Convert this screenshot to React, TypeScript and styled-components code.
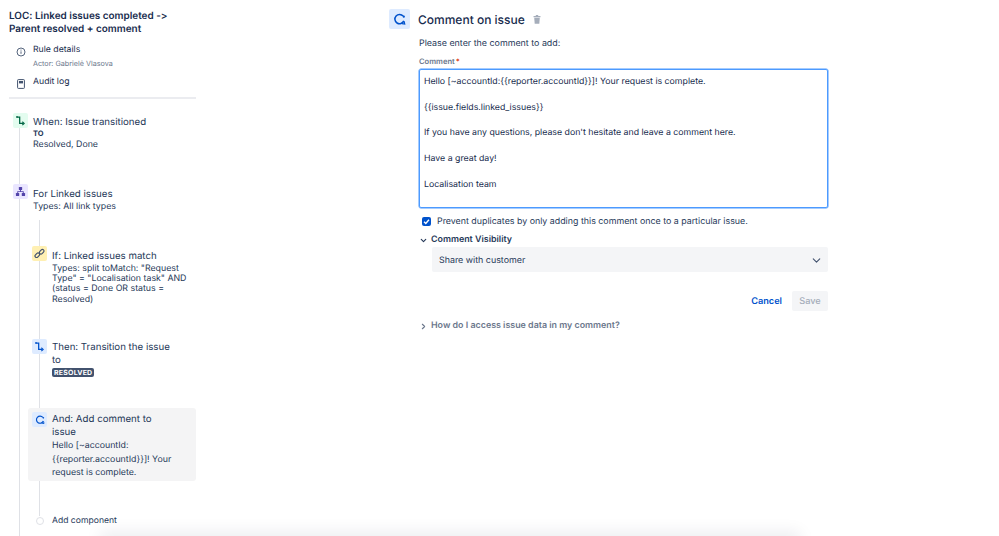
import React from 'react'
import styled, { createGlobalStyle } from 'styled-components'
import { ChevronDown, ChevronRight } from 'lucide-react'

const GlobalStyle = createGlobalStyle`
  html, body {
    margin: 0;
    padding: 0;
    background: #fff;
    font-family: Inter, "Liberation Sans", sans-serif;
    color: #172b4d;
    text-rendering: geometricPrecision;
    font-feature-settings: "calt" 0, "liga" 0;
  }
`

const Page = styled.div`
  position: relative;
  display: flex;
  width: 999px;
  height: 536px;
  overflow: hidden;
  background: #fff;
`

const Sidebar = styled.aside`
  width: 187px;
  margin-left: 9px;
  padding-top: 10px;
  flex-shrink: 0;
`

const RuleTitle = styled.h1`
  margin: 0;
  font-size: 9.95px;
  line-height: 13px;
  font-weight: 600;
`

const NavItem = styled.div<{ $top: number; $height: number }>`
  display: flex;
  gap: 7px;
  margin-top: ${props => props.$top}px;
  height: ${props => props.$height}px;
  padding-left: 6px;
`

const NavIcon = styled.div`
  width: 11px;
  padding-top: 3px;
  display: flex;
  justify-content: center;
  color: #42526e;
`

const NavLabel = styled.div`
  font-size: 8.7px;
  line-height: 12px;
`

const NavActor = styled.div`
  font-size: 7.2px;
  line-height: 11px;
  margin-top: 2px;
  color: #6b778c;
`

const Divider = styled.hr`
  border: 0;
  height: 2px;
  background: #ebecf0;
  margin: 7px 0 0;
`

const Timeline = styled.div`
  position: relative;
  margin-top: 14px;
  &::before {
    content: '';
    position: absolute;
    left: 10px;
    top: 14px;
    height: 430px;
    width: 1px;
    background: #dfe1e6;
  }
`

const Branch = styled.div`
  position: relative;
  &::before {
    content: '';
    position: absolute;
    left: 30px;
    top: -26px;
    height: 296px;
    width: 1px;
    background: #dfe1e6;
  }
`

const Step = styled.div<{ $indent?: boolean; $height: number; $active?: boolean }>`
  position: relative;
  display: flex;
  gap: 5px;
  height: ${props => props.$height}px;
  margin-left: ${props => (props.$indent ? 19 : 0)}px;
  padding-left: 4px;
  padding-top: ${props => (props.$active ? 4 : 0)}px;
  box-sizing: border-box;
  border-radius: 3px;
  background: ${props => (props.$active ? '#f4f4f5' : 'transparent')};
`

const StepIcon = styled.div<{ $bg: string; $color: string }>`
  width: 15px;
  height: 15px;
  flex-shrink: 0;
  display: flex;
  align-items: center;
  justify-content: center;
  border-radius: 2px;
  background: ${props => props.$bg};
  color: ${props => props.$color};
  position: relative;
  z-index: 1;
`

const StepBody = styled.div`
  min-width: 0;
  flex: 1;
`

const StepTitle = styled.div<{ $narrow?: boolean; $top: number }>`
  font-size: 9.7px;
  line-height: 13px;
  margin-top: ${props => props.$top}px;
  color: #253858;
  max-width: ${props => (props.$narrow ? '122px' : 'none')};
`

const StepText = styled.div`
  font-size: 8.8px;
  line-height: 10.4px;
  color: #253858;
  margin-top: 1px;
  padding-right: 6px;
`

const CommentPreview = styled(StepText)`
  line-height: 13.5px;
  margin-top: 0;
`

const ToLabel = styled.div`
  font-size: 7.5px;
  line-height: 10px;
  margin-top: 0;
  font-weight: 700;
  color: #253858;
`

const Lozenge = styled.span`
  display: inline-block;
  background: #42526e;
  color: #fff;
  font-size: 7px;
  font-weight: 700;
  line-height: 9px;
  letter-spacing: 0.2px;
  padding: 0 2px;
  border-radius: 2px;
  vertical-align: top;
  margin-top: 1px;
`

const AddRow = styled.div`
  display: flex;
  align-items: center;
  gap: 8px;
  margin-left: 27px;
  margin-top: 34px;
  font-size: 8.6px;
  line-height: 12px;
  color: #253858;
`

const AddDot = styled.div`
  box-sizing: border-box;
  width: 8px;
  height: 8px;
  border: 1px solid #dfe1e6;
  border-radius: 50%;
  background: #fff;
  position: relative;
  z-index: 1;
`

const Main = styled.main`
  margin-left: 193px;
  padding-top: 9px;
  width: 439px;
`

const Header = styled.div`
  display: flex;
  align-items: center;
  height: 20px;
`

const HeaderIcon = styled.div`
  width: 21px;
  height: 20px;
  background: #deebff;
  color: #0052cc;
  border-radius: 2px;
  display: flex;
  align-items: center;
  justify-content: center;
  margin-right: 8px;
`

const HeaderTitle = styled.h2`
  margin: 0;
  font-size: 12px;
  font-weight: 500;
  color: #172b4d;
`

const TrashButton = styled.div`
  display: flex;
  margin-left: 8px;
  color: #a5adba;
`

const Form = styled.div`
  margin-left: 30px;
`

const Intro = styled.div`
  font-size: 8.9px;
  line-height: 12px;
  margin-top: 9px;
  color: #253858;
`

const FieldLabel = styled.div`
  font-size: 7.6px;
  line-height: 10px;
  font-weight: 600;
  margin-top: 7px;
  color: #6b778c;
  span {
    color: #de350b;
    margin-left: 1px;
  }
`

const CommentBox = styled.div`
  box-sizing: border-box;
  height: 139px;
  margin-top: 2px;
  padding: 6px 4px;
  border: 1px solid #4c9aff;
  border-radius: 2px;
  box-shadow: 0 0 0 0.5px #4c9aff;
  font-size: 8.78px;
  line-height: 12.85px;
  color: #172b4d;
  white-space: pre-wrap;
`

const CheckRow = styled.label`
  display: flex;
  align-items: center;
  gap: 6px;
  margin-top: 7px;
  padding-left: 3px;
  height: 12px;
  font-size: 8.85px;
  color: #253858;
`

const CheckMark = styled.span`
  width: 9px;
  height: 9px;
  border-radius: 2px;
  background: #0052cc;
  display: flex;
  align-items: center;
  justify-content: center;
`

const SectionRow = styled.div<{ $muted?: boolean }>`
  display: flex;
  align-items: center;
  gap: 3px;
  font-size: 8.9px;
  line-height: 12px;
  font-weight: 600;
  color: ${props => (props.$muted ? '#6b778c' : '#253858')};
`

const VisibilityRow = styled(SectionRow)`
  margin-top: 7px;
`

const HelpRow = styled(SectionRow)`
  margin-top: 9px;
`

const Select = styled.div`
  display: flex;
  align-items: center;
  justify-content: space-between;
  box-sizing: border-box;
  height: 25px;
  margin: 1px 0 0 13px;
  padding: 1px 5px 0 7px;
  background: #f4f5f7;
  border-radius: 2px;
  font-size: 8.9px;
  color: #253858;
`

const Actions = styled.div`
  display: flex;
  justify-content: flex-end;
  align-items: center;
  gap: 10px;
  margin-top: 19px;
`

const CancelLink = styled.span`
  font-size: 9.2px;
  font-weight: 600;
  color: #0052cc;
  padding-top: 1px;
`

const SaveButton = styled.span`
  width: 36px;
  height: 20px;
  display: flex;
  align-items: center;
  justify-content: center;
  background: #f4f5f7;
  border-radius: 2px;
  font-size: 9.2px;
  font-weight: 500;
  color: #a5adba;
`

const BottomFade = styled.div`
  position: absolute;
  left: 100px;
  width: 700px;
  bottom: -30px;
  height: 30px;
  box-shadow: 0 -4px 16px rgba(9, 30, 66, 0.08);
`

const TransitionIcon = () => (
  <svg width="11" height="11" viewBox="0 0 12 12" fill="none" stroke="currentColor" strokeWidth="1.4">
    <circle cx="2.2" cy="2.2" r="1" fill="currentColor" stroke="none" />
    <path d="M2.5 2.2h2.6v7H9" />
    <path d="M8 7.4l2 1.8-2 1.8" strokeWidth="1.2" />
  </svg>
)

const BranchIcon = () => (
  <svg width="11" height="11" viewBox="0 0 12 12" fill="currentColor" stroke="none">
    <rect x="4.2" y="1" width="3.6" height="3.4" rx=".6" />
    <rect x="1" y="7.6" width="3.6" height="3.4" rx=".6" />
    <rect x="7.4" y="7.6" width="3.6" height="3.4" rx=".6" />
    <path d="M5.5 4h1v1.6h3v2.2h-1V6.6h-5v1.2h-1V5.6h3z" />
  </svg>
)

const LinkIcon = () => (
  <svg width="11" height="11" viewBox="0 0 12 12" fill="none" stroke="currentColor" strokeWidth="1.3">
    <rect x="0.8" y="6.2" width="5.6" height="3.4" rx="1.7" transform="rotate(-45 3.6 7.9)" />
    <rect x="5.6" y="2.4" width="5.6" height="3.4" rx="1.7" transform="rotate(-45 8.4 4.1)" />
  </svg>
)

const CommentIcon = ({ size }: { size: number }) => (
  <svg width={size} height={size} viewBox="0 0 12 12" fill="none" stroke="currentColor" strokeWidth="1.4">
    <path d="M9.4 2.9a4.3 4.3 0 1 0 .6 4.4" />
    <circle cx="10" cy="3.4" r="1" fill="currentColor" stroke="none" />
    <path d="M8.2 9.8l2.6.4-.5-2.4" strokeWidth="1.1" />
  </svg>
)

const InfoIcon = () => (
  <svg width="10" height="10" viewBox="0 0 10 10" fill="none" stroke="currentColor" strokeWidth="0.9">
    <circle cx="5" cy="5" r="4" />
    <path d="M5 4.4v2.4" />
    <circle cx="5" cy="3" r=".55" fill="currentColor" stroke="none" />
  </svg>
)

const PageIcon = () => (
  <svg width="8" height="10" viewBox="0 0 8 10" fill="none" stroke="currentColor" strokeWidth="1">
    <rect x="0.6" y="0.6" width="6.8" height="8.8" rx=".7" />
    <rect x="2" y="2" width="4" height="2.4" fill="currentColor" stroke="none" />
  </svg>
)

const TrashIcon = () => (
  <svg width="8" height="9" viewBox="0 0 8 9" fill="currentColor">
    <rect x="0.5" y="1" width="7" height="1.2" rx=".3" />
    <rect x="2.8" y="0" width="2.4" height="1" />
    <path d="M1.2 2.8h5.6l-.5 6H1.7z" />
  </svg>
)

const commentText = `Hello [~accountId:{{reporter.accountId}}]! Your request is complete.

{{issue.fields.linked_issues}}

If you have any questions, please don't hesitate and leave a comment here.

Have a great day!

Localisation team`

const previewText = 'Hello [~accountId: {{reporter.accountId}}]! Your request is complete.'

export default function App() {
  return (
    <Page>
      <GlobalStyle />
      <Sidebar>
        <RuleTitle>
          LOC: Linked issues completed -&gt;
          <br />
          Parent resolved + comment
        </RuleTitle>
        <NavItem $top={8} $height={32}>
          <NavIcon>
            <InfoIcon />
          </NavIcon>
          <div>
            <NavLabel>Rule details</NavLabel>
            <NavActor>Actor: Gabrielė Vlasova</NavActor>
          </div>
        </NavItem>
        <NavItem $top={0} $height={14}>
          <NavIcon>
            <PageIcon />
          </NavIcon>
          <NavLabel>Audit log</NavLabel>
        </NavItem>
        <Divider />
        <Timeline>
          <Step $height={71}>
            <StepIcon $bg="#e3fcef" $color="#006644">
              <TransitionIcon />
            </StepIcon>
            <StepBody>
              <StepTitle $top={3}>When: Issue transitioned</StepTitle>
              <ToLabel>TO</ToLabel>
              <StepText>Resolved, Done</StepText>
            </StepBody>
          </Step>
          <Step $height={62}>
            <StepIcon $bg="#eae6ff" $color="#5243aa">
              <BranchIcon />
            </StepIcon>
            <StepBody>
              <StepTitle $top={4}>For Linked issues</StepTitle>
              <StepText>Types: All link types</StepText>
            </StepBody>
          </Step>
          <Branch>
            <Step $indent $height={93}>
              <StepIcon $bg="#fff0b3" $color="#42526e">
                <LinkIcon />
              </StepIcon>
              <StepBody>
                <StepTitle $top={3.5}>If: Linked issues match</StepTitle>
                <StepText>
                  Types: split toMatch: "Request Type" = "Localisation task" AND (status = Done OR status = Resolved)
                </StepText>
              </StepBody>
            </Step>
            <Step $indent $height={69}>
              <StepIcon $bg="#deebff" $color="#0052cc">
                <TransitionIcon />
              </StepIcon>
              <StepBody>
                <StepTitle $narrow $top={1.5}>Then: Transition the issue to</StepTitle>
                <Lozenge>RESOLVED</Lozenge>
              </StepBody>
            </Step>
            <Step $indent $active $height={73}>
              <StepIcon $bg="#deebff" $color="#0052cc">
                <CommentIcon size={10} />
              </StepIcon>
              <StepBody>
                <StepTitle $narrow $top={1}>And: Add comment to issue</StepTitle>
                <CommentPreview>{previewText}</CommentPreview>
              </StepBody>
            </Step>
          </Branch>
          <AddRow>
            <AddDot />
            Add component
          </AddRow>
        </Timeline>
      </Sidebar>
      <Main>
        <Header>
          <HeaderIcon>
            <CommentIcon size={13} />
          </HeaderIcon>
          <HeaderTitle>Comment on issue</HeaderTitle>
          <TrashButton>
            <TrashIcon />
          </TrashButton>
        </Header>
        <Form>
          <Intro>Please enter the comment to add:</Intro>
          <FieldLabel>
            Comment<span>*</span>
          </FieldLabel>
          <CommentBox>{commentText}</CommentBox>
          <CheckRow>
            <CheckMark>
              <svg width="7" height="7" viewBox="0 0 8 8" fill="none" stroke="#fff" strokeWidth="1.6">
                <path d="M1.2 4.2l2 2 3.6-4.2" />
              </svg>
            </CheckMark>
            Prevent duplicates by only adding this comment once to a particular issue.
          </CheckRow>
          <VisibilityRow>
            <ChevronDown size={9} strokeWidth={3} />
            Comment Visibility
          </VisibilityRow>
          <Select>
            Share with customer
            <ChevronDown size={13} strokeWidth={2} color="#42526e" />
          </Select>
          <Actions>
            <CancelLink>Cancel</CancelLink>
            <SaveButton>Save</SaveButton>
          </Actions>
          <HelpRow $muted>
            <ChevronRight size={9} strokeWidth={3} />
            How do I access issue data in my comment?
          </HelpRow>
        </Form>
      </Main>
      <BottomFade />
    </Page>
  )
}
